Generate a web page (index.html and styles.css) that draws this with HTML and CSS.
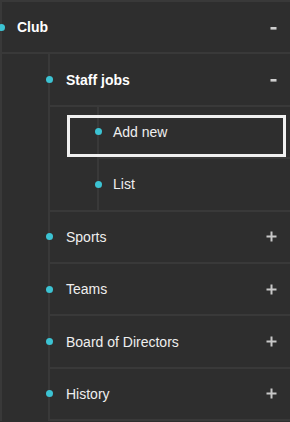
FILE: index.html
```html
<!DOCTYPE html>
<html lang="en">
<head>
<meta charset="utf-8">
<title>Club menu</title>
<link rel="stylesheet" href="styles.css">
</head>
<body>
<ul class="tree">
  <li class="node open root">
    <div class="row"><span class="dot"></span><span class="label">Club</span><svg class="toggle minus" width="7" height="3" viewBox="0 0 7 3"><rect x="0.5" y="0" width="6" height="2.6" fill="#cfcfcf"/></svg></div>
    <ul class="children">
      <li class="node open">
        <div class="row"><span class="dot"></span><span class="label">Staff jobs</span><svg class="toggle minus" width="7" height="3" viewBox="0 0 7 3"><rect x="0.5" y="0" width="6" height="2.6" fill="#cfcfcf"/></svg></div>
        <ul class="children sub">
          <li class="node"><div class="row focused"><span class="dot"></span><span class="label">Add new</span></div></li>
          <li class="node"><div class="row"><span class="dot"></span><span class="label">List</span></div></li>
        </ul>
      </li>
      <li class="node"><div class="row"><span class="dot"></span><span class="label">Sports</span><svg class="toggle plus" width="11" height="11" viewBox="0 0 11 11"><rect x="0.5" y="4.5" width="10" height="2" fill="#c8c8c8"/><rect x="4.5" y="0.5" width="2" height="10" fill="#c8c8c8"/></svg></div></li>
      <li class="node"><div class="row"><span class="dot"></span><span class="label">Teams</span><svg class="toggle plus" width="11" height="11" viewBox="0 0 11 11"><rect x="0.5" y="4.5" width="10" height="2" fill="#c8c8c8"/><rect x="4.5" y="0.5" width="2" height="10" fill="#c8c8c8"/></svg></div></li>
      <li class="node"><div class="row"><span class="dot"></span><span class="label">Board of Directors</span><svg class="toggle plus" width="11" height="11" viewBox="0 0 11 11"><rect x="0.5" y="4.5" width="10" height="2" fill="#c8c8c8"/><rect x="4.5" y="0.5" width="2" height="10" fill="#c8c8c8"/></svg></div></li>
      <li class="node"><div class="row"><span class="dot"></span><span class="label">History</span><svg class="toggle plus" width="11" height="11" viewBox="0 0 11 11"><rect x="0.5" y="4.5" width="10" height="2" fill="#c8c8c8"/><rect x="4.5" y="0.5" width="2" height="10" fill="#c8c8c8"/></svg></div></li>
    </ul>
  </li>
</ul>
</body>
</html>
```
FILE: styles.css
```css
* { box-sizing: border-box; }

html, body {
  margin: 0;
  padding: 0;
  background: #2e2e2e;
}

body {
  width: 290px;
  height: 422px;
  overflow: hidden;
  font-family: "Liberation Sans", Arial, sans-serif;
  font-size: 14px;
  color: #efefef;
}

ul {
  list-style: none;
  margin: 0;
  padding: 0;
}

.tree {
  border-top: 2px solid #393939;
}

.node {
  border-left: 2px solid #393939;
}

.children {
  margin-left: 46px;
}

.children.sub {
  margin-left: 47px;
}

.row {
  position: relative;
  box-sizing: content-box;
  height: 50.4px;
  display: flex;
  align-items: center;
  padding: 0 13px 0 16px;
  border-bottom: 2px solid #393939;
}

.root > .row {
  padding-left: 15px;
}

.sub > .node > .row {
  padding-left: 14px;
}

.node.open:not(.root) {
  border-bottom: 2px solid #393939;
}

.node.open:not(.root) > .children > .node:last-child > .row {
  border-bottom: 0;
}

.dot {
  position: absolute;
  left: -4.5px;
  top: 50%;
  width: 7px;
  height: 7px;
  margin-top: -3.5px;
  border-radius: 50%;
  background: #3cc3d3;
}

.label {
  flex: 1;
  white-space: nowrap;
}

.open > .row > .label {
  font-weight: bold;
  color: #ffffff;
}

.toggle {
  flex: none;
  display: block;
}

.toggle.minus {
  margin-top: 2px;
}

.focused::after {
  content: "";
  position: absolute;
  left: -32px;
  right: 4px;
  top: 8px;
  height: 36px;
  border: 3px solid #f0f0f0;
}
```
